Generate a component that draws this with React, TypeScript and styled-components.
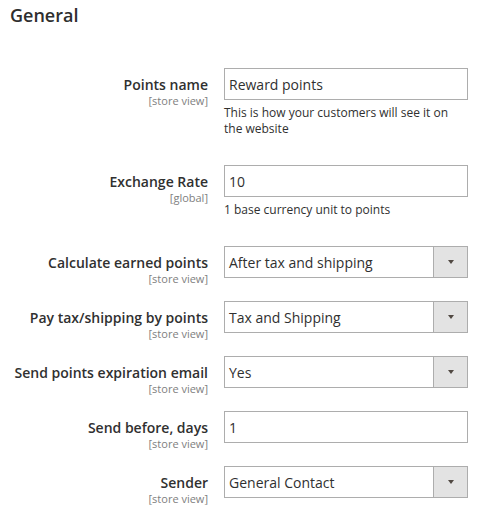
import React from 'react';
import styled, { createGlobalStyle } from 'styled-components';

const GlobalStyle = createGlobalStyle`
  body {
    margin: 0;
    background: #fff;
    font-family: 'Open Sans', 'Liberation Sans', sans-serif;
    color: #303030;
  }
`;

const Page = styled.div`
  width: 479px;
  padding: 3px 0 15px 0;
`;

const Heading = styled.h2`
  margin: 0 0 41px 10px;
  font-size: 18px;
  line-height: 24px;
  font-weight: 600;
  color: #2e2e2e;
`;

const Fields = styled.div`
  display: flex;
  flex-direction: column;
  gap: 23px;
`;

const Row = styled.div`
  display: grid;
  grid-template-columns: 208px 244px;
  column-gap: 16px;
  align-items: start;
`;

const LabelBox = styled.div`
  display: flex;
  flex-direction: column;
  align-items: flex-end;
  padding-top: 7px;
  margin-bottom: -7px;
  text-align: right;
`;

const Label = styled.span`
  font-size: 14px;
  line-height: 19px;
  font-weight: 600;
  color: #303030;
  white-space: nowrap;
`;

const Scope = styled.span`
  font-size: 11px;
  line-height: 13px;
  color: #808080;
`;

const Control = styled.div`
  display: flex;
  flex-direction: column;
`;

const TextInput = styled.input`
  box-sizing: border-box;
  width: 100%;
  height: 32px;
  margin: 0;
  padding: 0 4px;
  border: 1px solid #adadad;
  border-radius: 0;
  font-family: inherit;
  font-size: 14px;
  color: #303030;
  background: #fff;
  outline: none;
`;

const SelectBox = styled.div`
  box-sizing: border-box;
  display: flex;
  height: 32px;
  border: 1px solid #adadad;
  background: #fff;
`;

const SelectValue = styled.div`
  flex: 1;
  display: flex;
  align-items: center;
  padding: 0 4px;
  font-size: 14px;
  color: #303030;
`;

const SelectArrow = styled.div`
  width: 33px;
  display: flex;
  align-items: center;
  justify-content: center;
  background: #e3e3e3;
  border-left: 1px solid #adadad;
`;

const Triangle = styled.span`
  width: 0;
  height: 0;
  border-left: 3.5px solid transparent;
  border-right: 3.5px solid transparent;
  border-top: 4px solid #514943;
`;

const Note = styled.div`
  margin-top: 5px;
  padding-bottom: 5px;
  font-size: 12px;
  line-height: 16px;
  color: #303030;
`;

type Field = {
  label: string;
  scope: string;
  value: string;
  select?: boolean;
  note?: string;
};

const fields: Field[] = [
  { label: 'Points name', scope: '[store view]', value: 'Reward points', note: 'This is how your customers will see it on the website' },
  { label: 'Exchange Rate', scope: '[global]', value: '10', note: '1 base currency unit to points' },
  { label: 'Calculate earned points', scope: '[store view]', value: 'After tax and shipping', select: true },
  { label: 'Pay tax/shipping by points', scope: '[store view]', value: 'Tax and Shipping', select: true },
  { label: 'Send points expiration email', scope: '[store view]', value: 'Yes', select: true },
  { label: 'Send before, days', scope: '[store view]', value: '1' },
  { label: 'Sender', scope: '[store view]', value: 'General Contact', select: true },
];

export default function App() {
  return (
    <Page>
      <GlobalStyle />
      <Heading>General</Heading>
      <Fields>
        {fields.map((f) => (
          <Row key={f.label}>
            <LabelBox>
              <Label>{f.label}</Label>
              <Scope>{f.scope}</Scope>
            </LabelBox>
            <Control>
              {f.select ? (
                <SelectBox>
                  <SelectValue>{f.value}</SelectValue>
                  <SelectArrow>
                    <Triangle />
                  </SelectArrow>
                </SelectBox>
              ) : (
                <TextInput defaultValue={f.value} />
              )}
              {f.note && <Note>{f.note}</Note>}
            </Control>
          </Row>
        ))}
      </Fields>
    </Page>
  );
}
